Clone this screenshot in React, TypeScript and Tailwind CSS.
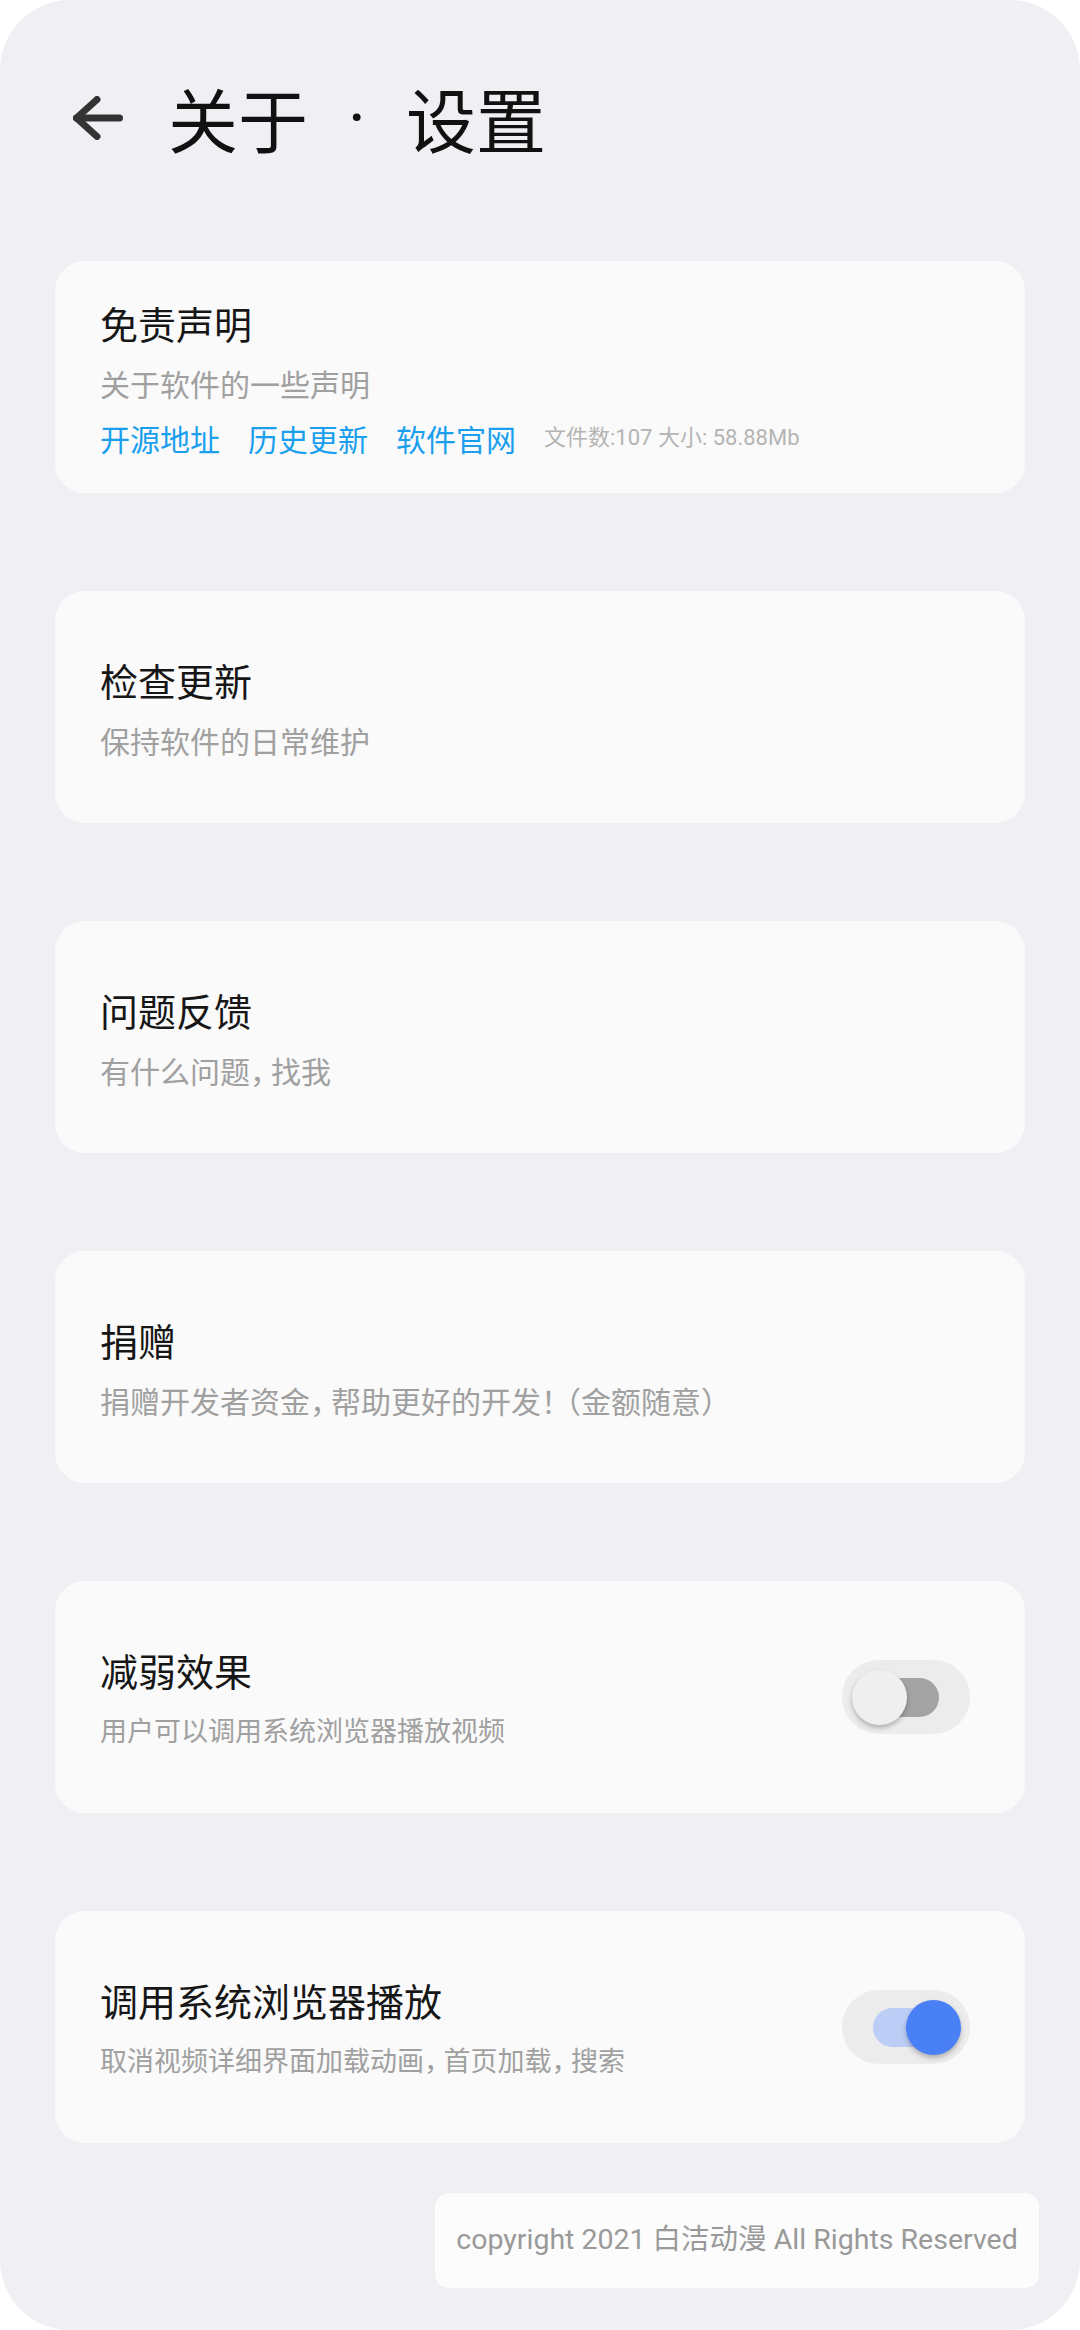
import { useState } from "react";

interface SettingItem {
  title: string;
  desc: string;
  small?: boolean;
  toggle?: boolean;
}

const items: SettingItem[] = [
  { title: "检查更新", desc: "保持软件的日常维护" },
  { title: "问题反馈", desc: "有什么问题，找我" },
  { title: "捐赠", desc: "捐赠开发者资金，帮助更好的开发！（金额随意）" },
  { title: "减弱效果", desc: "用户可以调用系统浏览器播放视频", small: true, toggle: false },
  { title: "调用系统浏览器播放", desc: "取消视频详细界面加载动画，首页加载，搜索", small: true, toggle: true },
];

// 开关
function Switch({ on, onChange }: { on: boolean; onChange: () => void }) {
  return (
    <button
      onClick={onChange}
      className="relative w-[128px] h-[74px] rounded-full bg-[#ececec] shrink-0"
      aria-pressed={on}
    >
      <span
        className={`absolute left-[31px] top-[18px] w-[66px] h-[39px] rounded-full ${
          on ? "bg-[#bccef6]" : "bg-[#a3a3a3]"
        }`}
      />
      <span
        className={`absolute top-[10px] w-[55px] h-[55px] rounded-full shadow-[0_3px_5px_rgba(0,0,0,0.25)] ${
          on ? "left-[64px] bg-[#4a80f5]" : "left-[10px] bg-[#efefef]"
        }`}
      />
    </button>
  );
}

function Card({ children }: { children: React.ReactNode }) {
  return (
    <div className="h-[232px] rounded-[30px] bg-[#fafafa] pl-[45px] pr-[55px] flex items-center justify-between">
      {children}
    </div>
  );
}

/** 标点稍微留点空隙 */
function renderDesc(text: string) {
  return text.split(/([，！（])/).map((part, i) => {
    if (part === "，" || part === "！") {
      return (
        <span key={i} className="pr-[6px]">
          {part}
        </span>
      );
    }
    if (part === "（") {
      return (
        <span key={i} className="pl-[4px]">
          {part}
        </span>
      );
    }
    return part;
  });
}

function CardText({ title, desc, small }: { title: string; desc: string; small?: boolean }) {
  return (
    <div className="flex flex-col">
      <p className="text-[38px] leading-[52px] text-[#161616]">{title}</p>
      <p
        className={`mt-[14px] leading-[40px] text-[#a0a0a0] [font-feature-settings:'halt'] ${
          small ? "text-[27px]" : "text-[30px]"
        }`}
      >
        {renderDesc(desc)}
      </p>
    </div>
  );
}

export default function App() {
  const [toggles, setToggles] = useState<Record<number, boolean>>({ 3: false, 4: true });

  return (
    <div className="w-[1080px] h-[2330px] bg-white font-['Noto_Sans_CJK_SC',sans-serif]">
      <div className="h-full rounded-[70px] bg-[#f0eff4] flex flex-col">
        {/* 头部 */}
        <div className="h-[236px] flex items-center pl-[73px]">
          <svg width="50" height="44" viewBox="0 0 50 44" fill="none" stroke="#333" strokeWidth={7} strokeLinecap="round" strokeLinejoin="round">
            <path d="M46.5 22H3.5" />
            <path d="M24 3.5L3.5 22L24 40.5" />
          </svg>
          <h1 className="ml-[45px] flex items-center text-[70px] leading-none text-[#111]">
            <span>关于</span>
            <span className="w-[98px] text-center font-['Roboto',sans-serif]">·</span>
            <span>设置</span>
          </h1>
        </div>

        {/* 列表 */}
        <div className="mt-[25px] px-[55px] flex flex-col gap-[98px]">
          <Card>
            <div className="flex flex-col">
              <p className="text-[38px] leading-[52px] text-[#161616]">免责声明</p>
              <p className="mt-[14px] text-[30px] leading-[40px] text-[#a0a0a0]">关于软件的一些声明</p>
              <div className="mt-[15px] flex items-center gap-[28px] text-[30px] leading-[40px] text-[#1a9fef]">
                <span>开源地址</span>
                <span>历史更新</span>
                <span>软件官网</span>
                <span className="text-[22px] text-[#b4b4b4] font-['Roboto','Noto_Sans_CJK_SC',sans-serif]">
                  文件数:107 大小: 58.88Mb
                </span>
              </div>
            </div>
          </Card>

          {items.map((item, i) => (
            <Card key={item.title}>
              <CardText title={item.title} desc={item.desc} small={item.small} />
              {item.toggle !== undefined && (
                <Switch
                  on={!!toggles[i]}
                  onChange={() => setToggles((t) => ({ ...t, [i]: !t[i] }))}
                />
              )}
            </Card>
          ))}
        </div>

        {/* 版权 */}
        <div className="mt-[50px] flex justify-end pr-[41px]">
          <div className="w-[604px] h-[95px] rounded-[14px] bg-[#fcfcfc] flex items-center justify-center text-[28.5px] text-[#999] font-['Roboto','Noto_Sans_CJK_SC',sans-serif]">
            copyright 2021 白洁动漫 All Rights Reserved
          </div>
        </div>
      </div>
    </div>
  );
}
